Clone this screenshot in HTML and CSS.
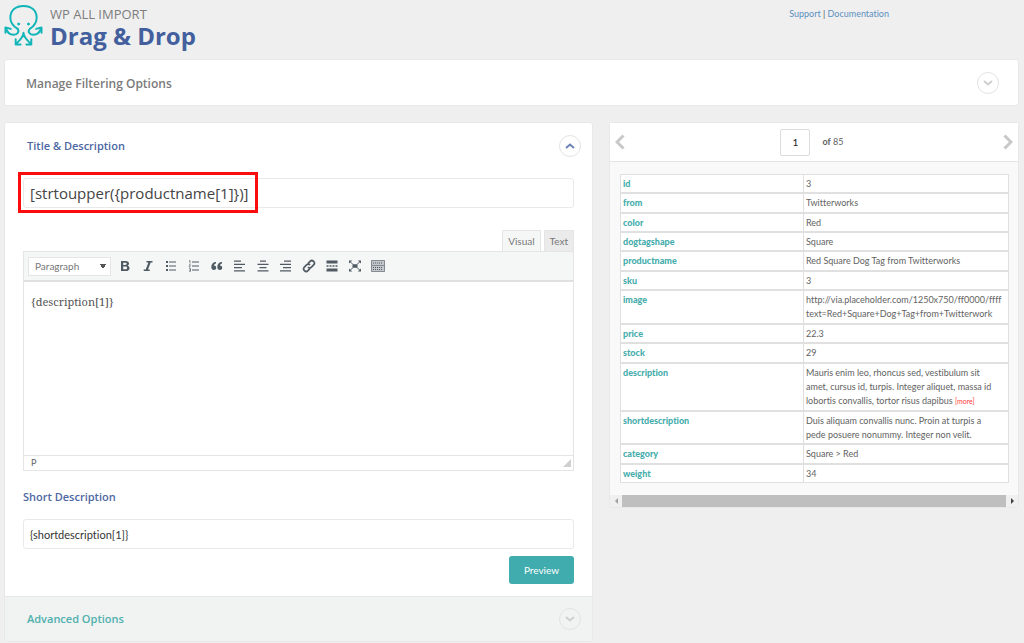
FILE: index.html
```html
<!DOCTYPE html>
<html lang="en">
<head>
<meta charset="utf-8">
<title>WP All Import - Drag &amp; Drop</title>
<link rel="stylesheet" href="styles.css">
</head>
<body>
<header class="top">
  <svg class="logo" viewBox="0 0 40 42" fill="none" stroke="#0fb5b8" stroke-width="2" stroke-linecap="round" stroke-linejoin="round">
    <path d="M14 25C9 22 6.500 18 6.500 13.500C6.500 6 12 1.500 20 1.500S33.500 6 33.500 13.500C33.500 18 31 22 26.500 25C24 27.500 26 31 30 31C35 31 37 28 38 24"/>
    <path d="M14 25C16 27.500 14 31 10 31C5 31 3 28 2 24"/>
    <path d="M1.500 29L1.500 23.500L7 25M33 25L38.500 23.500L38.500 29"/>
    <path d="M20 29C20 34 16 36 12.500 40.500M20 29C20 34 24 36 27.500 40.500M12 35.500L12 41L17 41M28 35.500L28 41L23 41"/>
    <circle cx="15" cy="20" r="1" fill="#0fb5b8" stroke-width="1"/><circle cx="25" cy="20" r="1" fill="#0fb5b8" stroke-width="1"/>
  </svg>
  <div class="brand">
    <p class="brand-sub">WP ALL IMPORT</p>
    <h1 class="brand-title">Drag &amp; Drop</h1>
  </div>
  <nav class="help"><a href="#support">Support</a> | <a href="#docs">Documentation</a></nav>
</header>

<section class="card filter">
  <h2 class="heading grey">Manage Filtering Options</h2>
  <button class="toggle" type="button" aria-label="Expand filtering options"><svg viewBox="0 0 10 6"><path d="M1 1L5 4.500L9 1"/></svg></button>
</section>

<main class="columns">
  <section class="card editor-card">
    <div class="card-head">
      <h2 class="heading">Title &amp; Description</h2>
      <button class="toggle open" type="button" aria-label="Collapse title and description"><svg viewBox="0 0 10 6"><path d="M1 5L5 1.500L9 5"/></svg></button>
    </div>
    <div class="card-body">
      <div class="title-field">
        <input class="field title-input" type="text" aria-label="Title" value="[strtoupper({productname[1]})]">
        <span class="marker"></span>
      </div>
      <div class="tabs">
        <button class="tab active" type="button">Visual</button>
        <button class="tab" type="button">Text</button>
      </div>
      <div class="editor">
        <div class="toolbar">
          <select class="format" aria-label="Format"><option>Paragraph</option></select>
          <button class="tool" type="button" aria-label="Bold"><svg viewBox="0 0 14 14"><path fill-rule="evenodd" d="M3 2h4.500c2.400 0 3.500 1 3.500 2.600 0 1-.5 1.800-1.400 2.200 1.200.3 1.900 1.200 1.900 2.400 0 1.900-1.400 2.800-3.800 2.800H3zM5.200 3.700v2.200h1.900c1.100 0 1.600-.4 1.600-1.100s-.5-1.100-1.600-1.100zM5.200 7.600v2.700h2c1.300 0 1.900-.5 1.900-1.400 0-.9-.7-1.300-1.900-1.300z"/></svg></button>
          <button class="tool" type="button" aria-label="Italic"><svg viewBox="0 0 14 14"><path d="M5.500 2h6v1.500H9.700L7 10.500h1.700V12h-6v-1.500h2l2.700-7H5.500z"/></svg></button>
          <button class="tool" type="button" aria-label="Bulleted list"><svg viewBox="0 0 14 14"><path d="M2 2h2v2H2zM2 6h2v2H2zM2 10h2v2H2zM5 2.500h7v1H5zM5 6.500h7v1H5zM5 10.500h7v1H5z"/></svg></button>
          <button class="tool" type="button" aria-label="Numbered list"><svg viewBox="0 0 14 14"><path d="M5 2.500h7v1H5zM5 6.500h7v1H5zM5 10.500h7v1H5z"/><path class="line" stroke-width=".7" d="M2 2L3 1.500V4.500M2 5.800H3.500L2 8H3.500M2 9.700H3.500V12.300H2M2.400 11H3.500"/></svg></button>
          <button class="tool" type="button" aria-label="Blockquote"><svg viewBox="0 0 14 14"><path d="M6 3C3 3 1.300 5 1.300 8c0 2 1 3 2.500 3s2.400-1 2.400-2.300S5.300 6.500 4 6.500c.1-1 .8-1.700 2-2zM12 3c-3 0-4.700 2-4.700 5 0 2 1 3 2.500 3s2.400-1 2.400-2.300-.9-2.200-2.200-2.200c.1-1 .8-1.700 2-2z"/></svg></button>
          <button class="tool" type="button" aria-label="Align left"><svg viewBox="0 0 14 14"><path d="M1 1.500h7v1.300H1zM1 4.800h11v1.300H1zM1 8h8v1.300H1zM1 11.200h11v1.300H1z"/></svg></button>
          <button class="tool" type="button" aria-label="Align centre"><svg viewBox="0 0 14 14"><path d="M4 1.500h6v1.300H4zM1.500 4.800h11v1.300h-11zM3.500 8h7v1.300h-7zM1.500 11.200h11v1.300h-11z"/></svg></button>
          <button class="tool" type="button" aria-label="Align right"><svg viewBox="0 0 14 14"><path d="M5 1.500h7v1.300H5zM1 4.800h11v1.300H1zM4 8h8v1.300H4zM1 11.200h11v1.300H1z"/></svg></button>
          <button class="tool" type="button" aria-label="Insert link"><svg viewBox="0 0 14 14"><g class="line" stroke-width="1.700" transform="rotate(-45 7 7)"><path d="M6 9.500H3A2.500 2.500 0 0 1 3 4.500H6A2.500 2.500 0 0 1 8.500 7"/><path d="M8 4.500H11A2.500 2.500 0 0 1 11 9.500H8A2.500 2.500 0 0 1 5.500 7"/></g></svg></button>
          <button class="tool" type="button" aria-label="Read more tag"><svg viewBox="0 0 14 14"><path d="M1.500 1.500h11v3h-11zM1.500 9.500h11v3h-11zM1.500 6.300h2v1.400h-2zM4.500 6.300h2v1.400h-2zM7.500 6.300h2v1.400h-2zM10.500 6.300h2v1.400h-2z"/></svg></button>
          <button class="tool" type="button" aria-label="Fullscreen"><svg viewBox="0 0 14 14"><path d="M4.500 5.300h5v3.400h-5zM1 1.500h3.200L1 4.500zM13 1.500H9.800L13 4.500zM1 12.500h3.200L1 9.500zM13 12.500H9.800L13 9.500z"/><path class="line" stroke-width="1" d="M2 2.500L5 5.500M12 2.500L9 5.500M2 11.500L5 8.500M12 11.500L9 8.500"/></svg></button>
          <button class="tool" type="button" aria-label="Toolbar toggle"><svg viewBox="0 0 14 14"><path class="key" d="M0 1h14v12H0z"/><path class="edge" d="M.5 1.500H13.500V12.500H.5zM0 6.500H14"/><path class="dots" d="M2 4H12M2 8.500H12"/><path class="dots" d="M2 10.500H12"/></svg></button>
        </div>
        <textarea class="content" aria-label="Description">{description[1]}</textarea>
        <div class="status"><span>P</span><svg class="grip" viewBox="0 0 8 8"><path d="M8 0V8H0z"/></svg></div>
      </div>
      <label class="heading short-label" for="short">Short Description</label>
      <input class="field" id="short" type="text" value="{shortdescription[1]}">
      <div class="actions"><button class="preview" type="button">Preview</button></div>
    </div>
    <div class="card-foot">
      <h2 class="heading teal">Advanced Options</h2>
      <button class="toggle" type="button" aria-label="Expand advanced options"><svg viewBox="0 0 10 6"><path d="M1 1L5 4.500L9 1"/></svg></button>
    </div>
  </section>

  <aside class="card record">
    <div class="pager">
      <button class="arrow" type="button" aria-label="Previous record"><svg viewBox="0 0 10 16"><path d="M8.500 1.500L2 8L8.500 14.500"/></svg></button>
      <div class="page"><input class="page-input" type="text" aria-label="Record number" value="1"><span><b>of</b> 85</span></div>
      <button class="arrow" type="button" aria-label="Next record"><svg viewBox="0 0 10 16"><path d="M1.500 1.500L8 8L1.500 14.500"/></svg></button>
    </div>
    <div class="record-body">
      <table class="data">
        <tbody>
        <tr><th scope="row">id</th><td>3</td></tr>
        <tr><th scope="row">from</th><td>Twitterworks</td></tr>
        <tr><th scope="row">color</th><td>Red</td></tr>
        <tr><th scope="row">dogtagshape</th><td>Square</td></tr>
        <tr><th scope="row">productname</th><td>Red Square Dog Tag from Twitterworks</td></tr>
        <tr><th scope="row">sku</th><td>3</td></tr>
        <tr><th scope="row">image</th><td>http://via.placeholder.com/1250x750/ff0000/ffff<br>text=Red+Square+Dog+Tag+from+Twitterwork</td></tr>
        <tr><th scope="row">price</th><td>22.3</td></tr>
        <tr><th scope="row">stock</th><td>29</td></tr>
        <tr><th scope="row">description</th><td>Mauris enim leo, rhoncus sed, vestibulum sit<br>amet, cursus id, turpis. Integer aliquet, massa id<br>lobortis convallis, tortor risus dapibus <a class="more" href="#more">[more]</a></td></tr>
        <tr><th scope="row">shortdescription</th><td>Duis aliquam convallis nunc. Proin at turpis a<br>pede posuere nonummy. Integer non velit.</td></tr>
        <tr><th scope="row">category</th><td>Square &gt; Red</td></tr>
        <tr><th scope="row">weight</th><td>34</td></tr>
        </tbody>
      </table>
    </div>
    <div class="scrollbar">
      <svg class="scroll-arrow" viewBox="0 0 12 12"><path fill="#a0a0a0" d="M8 3V9L5 6z"/></svg>
      <div class="thumb"></div>
      <svg class="scroll-arrow" viewBox="0 0 12 12"><path fill="#404040" d="M5 3V9L8 6z"/></svg>
    </div>
  </aside>
</main>
</body>
</html>
```
FILE: styles.css
```css
* { box-sizing: border-box; }

body {
  margin: 0;
  padding: 0 5px 0 4px;
  background: #efefef;
  color: #626262;
  font: 9px/14px Lato, "Open Sans", sans-serif;
  font-variant-ligatures: none;
}

h1, h2, p { margin: 0; }
button, input, select, textarea { font: inherit; color: inherit; }
button { padding: 0; border: 0; background: none; }

.top { display: flex; align-items: flex-start; gap: 7px; height: 59px; padding-top: 4px; }
.logo { width: 39px; height: 42px; }
.brand { flex: 1; padding-top: 2px; font-family: "Open Sans", sans-serif; }
.brand-sub { font-size: 13px; line-height: 16px; color: #7d7d7d; }
.brand-title { font-size: 24px; line-height: 28px; font-weight: 700; color: #435f9d; }
.help { padding: 3px 130px 0 0; color: #555; }
.help a { color: #5b8fc0; text-decoration: none; }

.card { background: #fff; border: 1px solid #e8e8e8; border-radius: 3px; }
.heading { display: block; font: 600 11px/16px "Open Sans", sans-serif; color: #4d67a3; }
.grey { padding-top: 2px; font-size: 12px; color: #7b7b7b; }
.teal { color: #4fb0ae; }

.filter, .card-head, .card-foot { display: flex; align-items: center; justify-content: space-between; }
.filter { height: 47px; padding: 0 19px 0 21px; margin-bottom: 16px; }
.card-head { height: 45px; padding: 0 11px 0 22px; }
.card-foot { height: 45px; padding: 0 11px 0 22px; background: #f0f3f2; border-top: 1px solid #e6e9e8; }

.toggle {
  display: grid;
  place-items: center;
  width: 22px;
  height: 22px;
  border: 1px solid #e3e3e3;
  border-radius: 50%;
}
.toggle svg { width: 10px; height: 6px; fill: none; stroke: #cfcfcf; stroke-width: 2; }
.open svg { stroke: #6c83b8; }

.columns { display: grid; grid-template-columns: 589fr 410fr; gap: 16px; align-items: start; }
.card-body { padding: 10px 18px 12px; }
.field {
  display: block;
  width: 100%;
  height: 30px;
  padding: 0 6px;
  border: 1px solid #e9e9e9;
  border-radius: 3px;
  background: #fff;
  color: #333;
  font-size: 11px;
}
.title-field { position: relative; }
.title-input { font-family: "Open Sans", sans-serif; font-size: 15px; color: #444; }
.marker {
  position: absolute;
  top: -6px;
  left: -5px;
  width: 240px;
  height: 41px;
  border: 3px solid #fb0d0d;
  pointer-events: none;
}

.tabs { display: flex; justify-content: flex-end; gap: 3px; margin-top: 22px; }
.tab {
  height: 21px;
  padding: 0 5px;
  border: 1px solid #e5e5e5;
  border-bottom: 0;
  background: #ebebeb;
  color: #777;
  font-size: 10px;
}
.active { background: #f5f7f7; }
.editor { border: 1px solid #e5e5e5; }
.toolbar {
  display: flex;
  align-items: center;
  gap: 9px;
  height: 30px;
  padding: 0 4px;
  background: #f5f7f7;
  border-bottom: 2px solid #e0e0e0;
}
.format {
  appearance: none;
  width: 83px;
  height: 19px;
  margin-right: -2px;
  padding: 0 6px;
  border: 1px solid #e5e5e5;
  border-radius: 0;
  background: linear-gradient(to bottom right, #555 50%, transparent 51%) no-repeat right 4px center / 3px 5px, linear-gradient(to bottom left, #555 50%, transparent 51%) no-repeat right 7px center / 3px 5px, #fff;
  color: #777;
  font-size: 10px;
}
.tool { width: 14px; height: 14px; }
.tool svg { display: block; width: 14px; height: 14px; fill: #505a63; }
.tool .line { fill: none; stroke: #505a63; }
.tool .key { fill: #c3c6ca; }
.tool .edge { fill: none; stroke: #858b93; }
.tool .dots { fill: none; stroke: #505a63; stroke-dasharray: 1 1; }
.content {
  display: block;
  width: 100%;
  height: 173px;
  padding: 12px 7px;
  border: 0;
  outline: 0;
  resize: none;
  background: #fff;
  color: #555;
  font: 11px/16px "Noto Serif", Georgia, "DejaVu Serif", serif;
}
.status {
  display: flex;
  align-items: center;
  justify-content: space-between;
  height: 15px;
  padding: 0 2px 0 7px;
  border-top: 1px solid #e5e5e5;
}
.grip { width: 8px; height: 8px; fill: #cfcfcf; }
.short-label { margin: 18px 0 14px; }
.actions { display: flex; justify-content: flex-end; margin-top: 7px; }
.preview {
  width: 65px;
  height: 28px;
  border-radius: 3px;
  background: #40acad;
  color: #fff;
  font-size: 10px;
}

.record { background: #f9f9f9; }
.pager {
  display: flex;
  align-items: center;
  justify-content: space-between;
  height: 39px;
  padding: 0 5px;
  border-bottom: 1px solid #e5e5e5;
  background: #fff;
}
.arrow { width: 10px; height: 22px; }
.arrow svg { display: block; width: 10px; height: 16px; fill: none; stroke: #c8c8c8; stroke-width: 3; }
.page { display: flex; align-items: center; gap: 12px; margin-right: 4px; }
.page-input {
  width: 30px;
  height: 27px;
  padding: 0;
  border: 1px solid #dcdcdc;
  border-radius: 2px;
  color: #222;
  font-size: 10px;
  text-align: center;
}
.record-body { padding: 12px 9px 12px 10px; }
.data { width: 100%; height: 309px; table-layout: fixed; border-collapse: collapse; background: #fff; }
.data th, .data td {
  padding: 2px 2px 1px;
  border: 1px solid #e0e0e0;
  border-width: 2px 1px;
  text-align: left;
  vertical-align: top;
}
.data tr:first-child > * { border-top-width: 1px; }
.data tr:last-child > * { border-bottom-width: 1px; }
.data th { width: 183px; color: #45adac; font-weight: 900; }
.data td { white-space: nowrap; }
.more { color: #ff3b3b; font-size: 7px; text-decoration: none; }
.scrollbar { display: flex; height: 12px; background: #f0f0f0; }
.scroll-arrow { width: 12px; height: 12px; }
.thumb { flex: 1; background: #bfbfbf; }
```
